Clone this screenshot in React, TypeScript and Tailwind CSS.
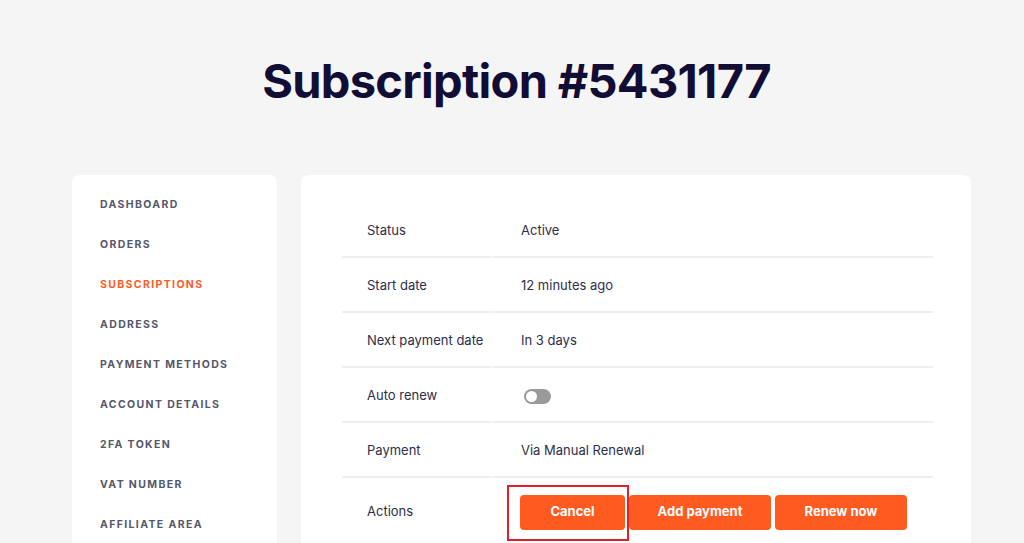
const navItems = [
  "Dashboard",
  "Orders",
  "Subscriptions",
  "Address",
  "Payment methods",
  "Account details",
  "2FA token",
  "VAT number",
  "Affiliate area",
];

const rows: { label: string; value: React.ReactNode }[] = [
  { label: "Status", value: "Active" },
  { label: "Start date", value: "12 minutes ago" },
  { label: "Next payment date", value: "In 3 days" },
  {
    label: "Auto renew",
    value: (
      <span className="ml-[3px] inline-flex h-[15px] w-[27px] items-center rounded-full bg-[#9a9a9a] px-[2px] align-middle">
        <span className="h-[11px] w-[11px] rounded-full bg-white" />
      </span>
    ),
  },
  { label: "Payment", value: "Via Manual Renewal" },
];

export default function App() {
  return (
    <div className="h-[543px] overflow-hidden bg-[#f5f5f5] font-['Inter',sans-serif] text-[#2e2e4a]">
      <h1 className="pl-[9px] pt-[53px] text-center text-[47px] font-bold leading-[56px] tracking-[-0.015em] text-[#110d35]">
        Subscription #5431177
      </h1>

      <div className="ml-[72px] mt-[66px] flex w-[899px] gap-[24px]">
        {/* Account nav */}
        <aside className="h-[400px] w-[205px] shrink-0 rounded-t-[8px] bg-white pt-[22px]">
          <ul>
            {navItems.map((item) => (
              <li
                key={item}
                className={`h-[40px] pl-[28px] text-[10.5px] font-bold uppercase leading-[16px] tracking-[0.13em] ${
                  item === "Subscriptions" ? "text-[#ff5a1f]" : "text-[#55576a]"
                }`}
              >
                {item}
              </li>
            ))}
          </ul>
        </aside>

        {/* Subscription details */}
        <main className="h-[400px] flex-1 rounded-t-[8px] bg-white pl-[40px] pr-[37px] pt-[28px]">
          <table className="w-full border-separate border-spacing-x-[1px] border-spacing-y-0 text-[13px]">
            <tbody>
              {rows.map((r) => (
                <tr key={r.label}>
                  <td className="h-[55px] w-[150px] border-b-2 border-[#eeeeee] pl-[25px] pt-[2px] align-middle">
                    {r.label}
                  </td>
                  <td className="h-[55px] border-b-2 border-[#eeeeee] pl-[28px] pt-[2px] align-middle">
                    {r.value}
                  </td>
                </tr>
              ))}
              <tr>
                <td className="h-[68px] pl-[25px] align-middle">Actions</td>
                <td className="h-[68px] pl-[27px] align-middle">
                  <div className="relative flex gap-[4px]">
                    <button className="h-[35px] w-[105px] rounded-[4px] bg-[#ff5a1f] text-[13px] font-bold text-white">
                      Cancel
                    </button>
                    <button className="h-[35px] w-[142px] rounded-[4px] bg-[#ff5a1f] text-[13px] font-bold text-white">
                      Add payment
                    </button>
                    <button className="h-[35px] w-[132px] rounded-[4px] bg-[#ff5a1f] text-[13px] font-bold text-white">
                      Renew now
                    </button>
                    {/* highlight annotation */}
                    <span className="pointer-events-none absolute left-[-13px] top-[-10px] h-[56px] w-[122px] border-2 border-[#e0212b]" />
                  </div>
                </td>
              </tr>
            </tbody>
          </table>
        </main>
      </div>
    </div>
  );
}
